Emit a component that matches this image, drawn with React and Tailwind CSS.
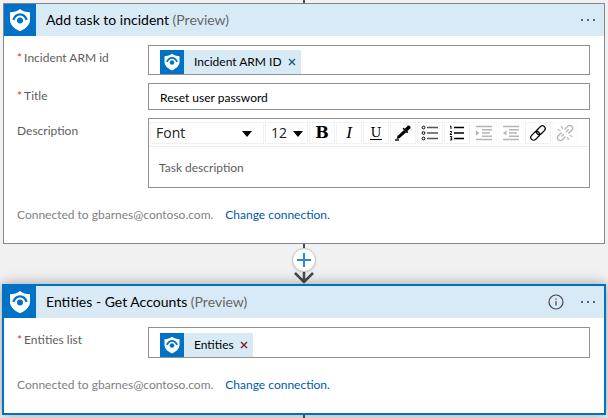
import React from "react";

const iconButton =
  "flex h-[22px] w-[26px] items-center justify-center border border-[#f1f1f1] text-black disabled:border-[#fafafa] disabled:text-[#b4b4b4]";

function ShieldIcon({ className }) {
  return (
    <svg viewBox="0 0 32 32" className={className} aria-hidden="true">
      <rect width="32" height="32" fill="#0072c6" />
      <path
        d="M16 5c2.800 2.200 6 3.100 10 3.200v7.800c0 5-4.500 8.700-10 11.300C10.500 24.700 6 21 6 16V8.200C10 8.100 13.200 7.200 16 5z"
        fill="#fff"
      />
      <path d="M9.300 15.800c1.400-3.600 3.700-5.400 6.700-5.400s5.300 1.800 6.700 5.400" fill="none" stroke="#0072c6" strokeWidth="2.300" />
      <circle cx="16" cy="16.500" r="3" fill="#0072c6" />
    </svg>
  );
}

function Header({ title, info }) {
  return (
    <header className="flex h-8 items-center bg-[#d8eaf6] pr-[9px]">
      <ShieldIcon className="size-8 shrink-0" />
      <h2 className="flex-1 pl-[10px] text-[14px] leading-5 text-black">
        {title} <span className="text-[#666]">(Preview)</span>
      </h2>
      {info && (
        <button type="button" aria-label="Information" className="mr-[17px]">
          <svg viewBox="0 0 16 16" className="size-4" fill="none" stroke="#4a3f5c" strokeWidth="1.200">
            <circle cx="8" cy="8" r="7" />
            <path d="M8 7v4.500M8 4.500v1.200" />
          </svg>
        </button>
      )}
      <button type="button" aria-label="More options" className="flex h-5 items-center gap-1">
        <span className="size-[2px] bg-[#4a6590]" />
        <span className="size-[2px] bg-[#4a6590]" />
        <span className="size-[2px] bg-[#4a6590]" />
      </button>
    </header>
  );
}

function Field({ label, required, htmlFor, children }) {
  const Label = htmlFor ? "label" : "span";
  return (
    <div className="flex items-start">
      <Label htmlFor={htmlFor} className="flex w-[131px] shrink-0 gap-[2px] leading-[26px] text-[#605e5c]">
        {required && <span className="text-[#e03038]">*</span>}
        {label}
      </Label>
      <div className="min-w-0 flex-1">{children}</div>
    </div>
  );
}

function TokenBox({ label, name, className, removeClass }) {
  return (
    <div role="group" aria-label={label} className={"border border-[#919191] bg-white px-[11px] " + className}>
      <span className="inline-flex h-6 items-center bg-[#d8eaf6] pr-[5px] align-top text-black">
        <ShieldIcon className="mr-[10px] size-6" />
        {name}
        <button type="button" aria-label={"Remove " + name} className={"ml-[6px] " + removeClass}>
          <svg viewBox="0 0 8 8" className="size-2" fill="none" stroke="currentColor" strokeWidth="1.400">
            <path d="M1 1l6 6M7 1L1 7" />
          </svg>
        </button>
      </span>
    </div>
  );
}

function Connection() {
  return (
    <p className="mt-[18px] leading-[18px] text-[#808080]">
      Connected to gbarnes@contoso.com.
      <a href="#connection" className="ml-3 text-[#0058ad]">
        Change connection.
      </a>
    </p>
  );
}

function Dropdown({ label, value, options, className, arrowClass }) {
  return (
    <div className={"relative h-[22px] border border-[#f0f0f0] " + className}>
      <select
        aria-label={label}
        defaultValue={value}
        className="h-full w-full appearance-none bg-transparent pl-[5px] font-['Open_Sans',sans-serif] text-[14px] leading-5 text-[#222]"
      >
        {options.map((option) => (
          <option key={option}>{option}</option>
        ))}
      </select>
      <svg viewBox="0 0 10 6" className={"pointer-events-none absolute top-[8px] h-[6px] w-[10px] " + arrowClass}>
        <path d="M0 0h10L5 6z" />
      </svg>
    </div>
  );
}

function Glyph({ children }) {
  return (
    <svg viewBox="0 0 18 16" className="h-4 w-[18px]" fill="none" stroke="currentColor" aria-hidden="true">
      {children}
    </svg>
  );
}

function Toolbar() {
  return (
    <div className="flex h-7 items-center gap-px overflow-hidden border-b border-[#eee] pl-px">
      <Dropdown label="Font" value="Font" options={["Font", "Arial", "Georgia"]} className="w-[114px]" arrowClass="right-[11px]" />
      <Dropdown label="Font size" value="12" options={["12", "14", "18"]} className="w-[43px]" arrowClass="right-1" />
      <button type="button" aria-label="Bold" className={iconButton + " font-['DejaVu_Serif',serif] text-[16px] leading-5 font-bold"}>
        B
      </button>
      <button type="button" aria-label="Italic" className={iconButton + " font-['Liberation_Serif',serif] text-[17px] leading-5 italic"}>
        I
      </button>
      <button type="button" aria-label="Underline" className={iconButton}>
        <span className="border-b border-black px-px font-['DejaVu_Serif',serif] text-[13px] leading-[13px]">U</span>
      </button>
      <button type="button" aria-label="Text color" className={iconButton}>
        <Glyph>
          <path d="M2.500 14l1-3 6.500-6 2.200 2.200-6.700 6z" fill="currentColor" stroke="none" />
          <path d="M8.500 3.600l1-.9 1.300 1 2.700-2.700c1.600-1.400 4 .8 2.700 2.500l-2.800 2.500.8 1.300-1.200 1z" fill="currentColor" stroke="none" />
          <path d="M1 15h4" strokeWidth="1.400" />
        </Glyph>
      </button>
      <button type="button" aria-label="Bulleted list" className={iconButton}>
        <Glyph>
          <circle cx="2.500" cy="2.500" r="1.400" />
          <circle cx="2.500" cy="8" r="1.400" />
          <circle cx="2.500" cy="13.500" r="1.400" />
          <path d="M6 2.500h11M6 8h11M6 13.500h11" stroke="#555" strokeWidth="1.300" />
        </Glyph>
      </button>
      <button type="button" aria-label="Numbered list" className={iconButton}>
        <Glyph>
          <path d="M6 2.500h10M6 8h10M6 13.500h10" strokeWidth="1.500" />
          <path d="M2 1.500l1-.5v3M2 6.500h1.500v1L2 9.500h2M2 11.500h1.700v3.500H2M2.500 13.200h1" />
        </Glyph>
      </button>
      <button type="button" aria-label="Increase indent" disabled className={iconButton}>
        <Glyph>
          <path d="M1 1.500h16M7 4.700h10M7 8h8M7 11.200h10M1 14.500h16" strokeWidth="1.500" />
          <path d="M1 5.500v5L4.500 8z" fill="currentColor" stroke="none" />
        </Glyph>
      </button>
      <button type="button" aria-label="Decrease indent" disabled className={iconButton}>
        <Glyph>
          <path d="M1 1.500h16M7 4.700h10M7 8h8M7 11.200h10M1 14.500h16" strokeWidth="1.500" />
          <path d="M4.500 5.500v5L1 8z" fill="currentColor" stroke="none" />
        </Glyph>
      </button>
      <button type="button" aria-label="Insert link" className={iconButton}>
        <Glyph>
          <g transform="rotate(-45 9 8)" strokeWidth="1.300">
            <rect x="0" y="5.200" width="10" height="5.600" rx="2.800" />
            <rect x="8" y="5.200" width="10" height="5.600" rx="2.800" />
          </g>
        </Glyph>
      </button>
      <button type="button" aria-label="Remove link" disabled className={iconButton}>
        <Glyph>
          <g transform="rotate(-45 9 8)" strokeWidth="1.300">
            <path d="M7 5.200H2.300a2.800 2.800 0 0 0 0 5.600H7M11 5.200h4.700a2.800 2.800 0 0 1 0 5.600H11M4 8h3.500M10.500 8H14" />
          </g>
          <path d="M5.500 1l1 3M1.500 4.500l3 1M12.500 15l-1-3M16.500 11.500l-3-1" strokeWidth="1.200" />
        </Glyph>
      </button>
    </div>
  );
}

export default function App() {
  return (
    <main className="flex min-h-screen flex-col bg-[#f1f1f1] font-[Lato,'Open_Sans',sans-serif] text-[12px]">
      <div className="mx-auto h-[3px] w-[2px] bg-[#484848]" />

      <section className="mx-[3px] border border-[#868686] bg-white">
        <Header title="Add task to incident" />
        <div className="flex flex-col gap-2 pt-[9px] pr-[14px] pb-[19px] pl-[13px]">
          <Field label="Incident ARM id" required>
            <TokenBox label="Incident ARM id" name="Incident ARM ID" className="pt-1" removeClass="text-[#1c5c74]" />
          </Field>
          <Field label="Title" required htmlFor="title">
            <input
              id="title"
              defaultValue="Reset user password"
              className="block h-[27px] w-full border border-[#919191] bg-white px-[11px] pt-[2px] text-black"
            />
          </Field>
          <Field label="Description" htmlFor="description">
            <div className="border border-[#919191] bg-white">
              <Toolbar />
              <textarea
                id="description"
                defaultValue="Task description"
                className="block h-10 w-full resize-none px-[10px] pt-3 leading-[18px] text-[#605e5c]"
              />
            </div>
          </Field>
          <div className="-mt-2">
            <Connection />
          </div>
        </div>
      </section>

      <div className="flex h-10 flex-col items-center">
        <div className="h-1 w-[2px] bg-[#484848]" />
        <button
          type="button"
          aria-label="Insert a new step"
          className="flex size-6 items-center justify-center rounded-full border border-[#c8c8c8] bg-white shadow-sm"
        >
          <svg viewBox="0 0 14 14" className="size-[14px]" stroke="#2b88d8" strokeWidth="2">
            <path d="M7 0v14M0 7h14" />
          </svg>
        </button>
        <svg viewBox="0 0 20 12" className="h-3 w-5" fill="none" stroke="#484848" strokeWidth="2.500">
          <path d="M10 0v10M1 1l9 9 9-9" />
        </svg>
      </div>

      <section className="mx-[2px] border-2 border-[#0072c6] bg-white shadow-[0_0_12px_rgba(0,0,0,0.35)]">
        <Header title="Entities - Get Accounts" info />
        <div className="pt-[9px] pr-[14px] pb-[19px] pl-[13px]">
          <Field label="Entities list" required>
            <TokenBox label="Entities list" name="Entities" className="pt-[5px]" removeClass="text-[#7c1c28]" />
          </Field>
          <Connection />
        </div>
      </section>

      <div className="mx-auto min-h-[3px] w-[2px] flex-1 bg-[#484848]" />
    </main>
  );
}
